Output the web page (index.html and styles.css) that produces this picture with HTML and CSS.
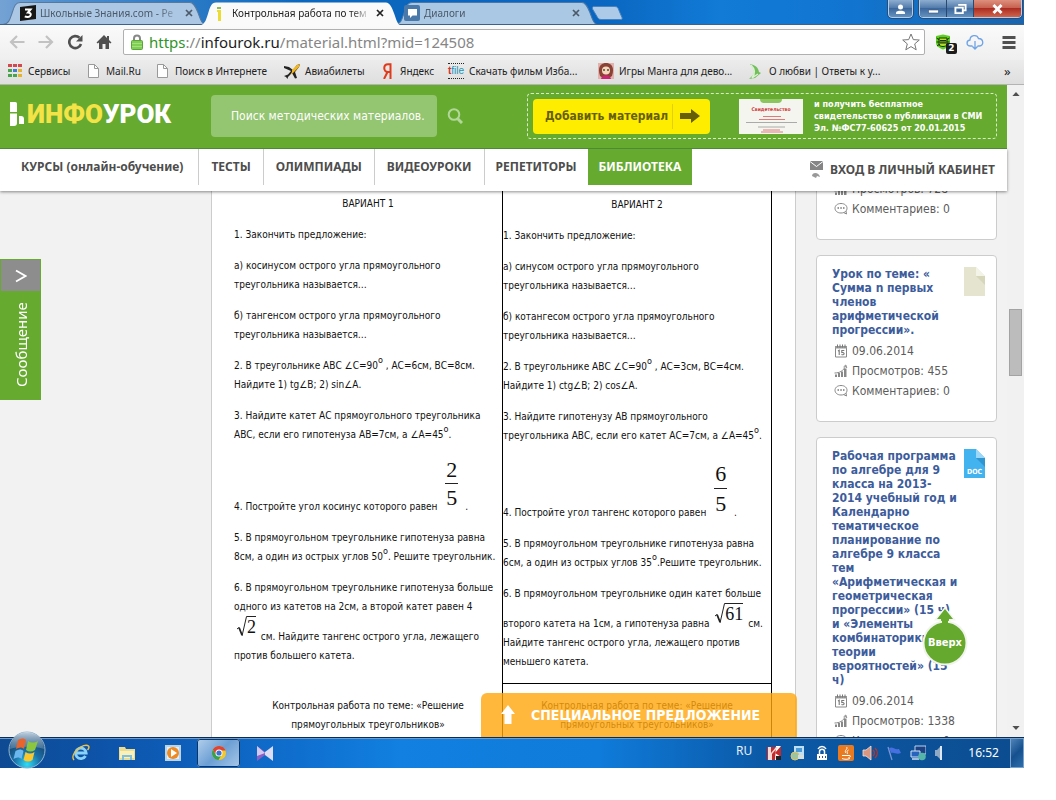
FILE: index.html
```html
<!DOCTYPE html>
<html lang="ru">
<head>
<meta charset="utf-8">
<title>Контрольная работа по теме</title>
<link rel="stylesheet" href="styles.css">
</head>
<body>
<svg class="defs" width="0" height="0" aria-hidden="true">
  <symbol id="i-cal" viewBox="0 0 14 14"><path d="M1.500 3h11v10h-11z" fill="#fff" stroke="#888"/><path d="M1 2h12v2.500H1z" fill="#999"/><path d="M3.500 .5v3M6 .5v3M8.500 .5v3M11 .5v3" stroke="#777"/><path d="M4 7l1.200-.8V11M10.300 6.500H7.800V8.500c2.600-.4 3 2 1.200 2.200-.7 0-1.200-.1-1.500-.4" fill="none" stroke="#777" stroke-width="1.100"/></symbol>
  <symbol id="i-views" viewBox="0 0 14 14"><path d="M1 10.500h2V13H1zM4 9h2v4H4zM7 7.500h2V13H7zM10 4.500h2.500V13H10z" fill="#888"/><path d="M.5 9c5 0 9-2 11-7M9.500 3l2.300-2 1 3" fill="none" stroke="#888"/></symbol>
  <symbol id="i-com" viewBox="0 0 14 14"><path d="M7 1.500c8 0 8 9.500 0 9.500-8 0-8-9.500 0-9.500zM9.500 10.500l3 1.500-.5-3" fill="#fff" stroke="#888"/><path d="M3.500 6h1.500M6.300 6h1.500M9 6h1.500" stroke="#777" stroke-width="1.500"/></symbol>
  <symbol id="i-page" viewBox="0 0 16 16"><path d="M3.500 1.500h6l4 4v9h-10z" fill="#fdfdfd" stroke="#999"/><path d="M9.500 1.500v4h4" fill="none" stroke="#999"/></symbol>
  <symbol id="i-x" viewBox="0 0 8 8"><path d="M1 1l6 6M7 1L1 7" stroke="currentColor" stroke-width="1.700"/></symbol>
</svg>

<div class="desktop">
  <header class="tabstrip">
    <div class="tab">
      <svg class="tab-shape" viewBox="0 0 200 23" preserveAspectRatio="none"><path d="M0 23.500C6 23 7 18 9 12S12 1.500 17 1.500H185c4 0 6 5 8 10s3 11 7 12z" fill="#acc7e3" stroke="#56799f"/></svg>
      <svg class="fav" viewBox="0 0 16 16"><path d="M0 2l16-2v14L0 16z" fill="#161616"/><path d="M5 4.500h5.500L8 7.500c4 0 3.500 4.500-.5 4.500-1 0-2-.2-2.700-.6" fill="none" stroke="#fff" stroke-width="2"/></svg>
      <span class="tab-title">Школьные Знания.com - Ре</span>
      <button class="tab-x" aria-label="Закрыть"><svg><use href="#i-x"/></svg></button>
    </div>
    <div class="tab tab-on">
      <svg class="tab-shape" viewBox="0 0 200 23" preserveAspectRatio="none"><path d="M0 23.500C6 23 7 18 9 12S12 1.500 17 1.500H185c4 0 6 5 8 10s3 11 7 12z" fill="#fafafa"/></svg>
      <svg class="fav" viewBox="0 0 16 16"><path d="M5 2h4v2H5z" fill="#8dbb4b"/><path d="M5 5h4v11H6V7H5z" fill="#ecdb33"/></svg>
      <span class="tab-title">Контрольная работа по тем</span>
      <button class="tab-x" aria-label="Закрыть"><svg><use href="#i-x"/></svg></button>
    </div>
    <div class="tab tab-last">
      <svg class="tab-shape" viewBox="0 0 200 23" preserveAspectRatio="none"><path d="M0 23.500C6 23 7 18 9 12S12 1.500 17 1.500H185c4 0 6 5 8 10s3 11 7 12z" fill="#aac8e4" stroke="#4878aa"/></svg>
      <svg class="fav" viewBox="0 0 16 16"><rect width="16" height="16" rx="2" fill="#4a78a8"/><path d="M4 4h9v6.500H8.500L6 13v-2.500H4z" fill="#fff"/></svg>
      <span class="tab-title">Диалоги</span>
      <button class="tab-x" aria-label="Закрыть"><svg><use href="#i-x"/></svg></button>
    </div>
    <button class="newtab" aria-label="Новая вкладка"><svg viewBox="0 0 32 16"><path d="M3 1.500h21c2 0 3 1 4 4l3 7c.5 1.500 0 2-1.500 2H10c-2 0-3-1-4-3L1.500 4C1 2.500 1.500 1.500 3 1.500z" fill="#adcae8" stroke="#4682bd"/></svg></button>
    <div class="wbtns">
      <button class="wb user" aria-label="Профиль"><svg viewBox="0 0 12 12"><circle cx="6" cy="4" r="2.500" fill="#fff"/><path d="M1.500 11V9.500C1.500 7 10.500 7 10.500 9.500V11z" fill="#fff"/></svg></button>
      <div class="wgroup">
        <button class="wb" aria-label="Свернуть"><svg viewBox="0 0 12 12"><path d="M1 7h10v3H1z" fill="#fff" stroke="#35527a" stroke-width=".6"/></svg></button>
        <button class="wb" aria-label="Развернуть"><svg viewBox="0 0 14 12"><path d="M4.500 1.500h8v6h-2M1.500 4.500h8v6h-8z" fill="none" stroke="#fff" stroke-width="2"/><path d="M4 7h3v1H4z" fill="#35527a"/></svg></button>
        <button class="wb close" aria-label="Закрыть окно"><svg viewBox="0 0 12 12"><path d="M2 2l8 8M10 2l-8 8" stroke="#fff" stroke-width="3"/></svg></button>
      </div>
    </div>
  </header>

  <div class="toolbar">
    <button class="tb" aria-label="Назад"><svg viewBox="0 0 16 16"><path d="M15.500 8H2M8 2L2 8l6 6" fill="none" stroke="#c2c2c2" stroke-width="2.200"/></svg></button>
    <button class="tb" aria-label="Вперёд"><svg viewBox="0 0 16 16"><path d="M.5 8H14M8 2l6 6-6 6" fill="none" stroke="#c2c2c2" stroke-width="2.200"/></svg></button>
    <button class="tb" aria-label="Обновить"><svg viewBox="0 0 16 16"><path d="M12.500 3.800A6 6 0 1 0 14 10" fill="none" stroke="#505050" stroke-width="2.600"/><path d="M15.500 1v6.500H9z" fill="#505050"/></svg></button>
    <button class="tb" aria-label="Домой"><svg viewBox="0 0 16 16"><path d="M8 1L.5 8.500l1.200 1L3 8.500V15h3.500v-5h3v5H13V8.500l1.300 1 1.200-1L13 6V2h-2v2z" fill="#505050"/></svg></button>
    <div class="omni">
      <svg class="lock" viewBox="0 0 12 16"><path d="M3 7V4.500C3 .5 9 .5 9 4.500V7" fill="none" stroke="#888" stroke-width="2"/><rect x=".5" y="6.500" width="11" height="9" rx="1" fill="#80cf54" stroke="#5aa43a"/><path d="M1 9.500h10M1 12.500h10" stroke="#a5e07f"/></svg>
      <a class="url" href="#"><span class="sec">https</span>://<span class="host">infourok.ru</span>/material.html?mid=124508</a>
      <svg class="star" viewBox="0 0 18 18"><path d="M9 1l2.300 5.600 6 .4-4.600 3.900 1.500 5.900L9 13.600l-5.200 3.200 1.500-5.900L.7 7l6-.4z" fill="#fff" stroke="#777"/></svg>
    </div>
    <div class="exts">
      <div class="ext"><svg viewBox="0 0 16 16"><path d="M1 2l7-1.500L15 2v7c0 3-3 5-7 6.500C4 14 1 12 1 9z" fill="#5fd022"/><path d="M4 4h8v7c-2 2-6 2-8 0zM1.500 4l3 2M14.500 4l-3 2M1.500 8h13M2 12l3-2M14 12l-3-2" stroke="#153806" fill="#b4de2d"/><path d="M5 6.500h6M5 9h6" stroke="#153806"/></svg><span class="badge">2</span></div>
      <svg class="cloud" viewBox="0 0 18 16"><path d="M6.500 12H4.500C0 12 0 6.500 4 6 4 1 11 0 12.500 4.500c5 0 6 7 1 7.500h-2M9 7v8M6.500 12.500L9 15l2.500-2.500" fill="none" stroke="#6ea3e6" stroke-width="1.300"/></svg>
      <button class="tb" aria-label="Меню"><svg viewBox="0 0 16 16"><path d="M1.500 3.500h13M1.500 8.500h13M1.500 13.500h13" stroke="#505050" stroke-width="3"/></svg></button>
    </div>
  </div>

  <nav class="bookmarks">
    <a href="#"><svg viewBox="0 0 16 16"><path d="M1 1h4v3H1zM6 1h4v3H6zM11 1h4v3h-4z" fill="#d5474e"/><path d="M1 6h4v3H1z" fill="#49a54d"/><path d="M6 6h4v3H6z" fill="#3f7fd0"/><path d="M11 6h4v3h-4zM11 11h4v3h-4z" fill="#e6b32e"/><path d="M1 11h4v3H1zM6 11h4v3H6z" fill="#49a54d"/></svg>Сервисы</a>
    <a href="#"><svg><use href="#i-page"/></svg>Mail.Ru</a>
    <a href="#"><svg><use href="#i-page"/></svg>Поиск в Интернете</a>
    <a href="#"><svg viewBox="0 0 16 16"><path d="M0 3l5 1 4 3 4-5 3-1-1 3-4 5 2 6-2 .5L8 10l-4 4-.5 2L2 14l-2-1 4-1.500L7 8 0 5z" fill="#222"/><path d="M8 7l5-5 3-1-1 3-6 6-3 2 2-3z" fill="#f2b61c"/></svg>Авиабилеты</a>
    <a href="#"><svg viewBox="0 0 16 16"><path d="M11.500 16V1.200H9c-5 0-5 7.800 0 7.800h2.500M8.500 9L5 16" fill="none" stroke="#e03a1c" stroke-width="2"/></svg>Яндекс</a>
    <a href="#"><span class="tfile"><b>t</b>file</span>Скачать фильм Изба...</a>
    <a href="#"><svg viewBox="0 0 16 16"><path d="M0 0h16v16H0z" fill="#e2b3ae"/><path d="M2 13C-1 4 3 0 8 0s9 4 6 13l-3 2H5z" fill="#8b4236"/><circle cx="8" cy="7.500" r="4" fill="#f7d6bd"/><path d="M5 7h2M9 7h2" stroke="#453" stroke-width="1.500"/><path d="M3 16c1-5 9-5 10 0z" fill="#cc2473"/></svg>Игры Манга для дево...</a>
    <a href="#"><svg viewBox="0 0 16 16"><path d="M2 1c5 1 8 3 9 8l2 1-6 5-6 1c3-3 5-4 5-7S4 4 2 1z" fill="#74bf5d"/><path d="M3 2c4 4 5 8 1 13l6-4" fill="none" stroke="#d9f2d0" stroke-width="1.500"/></svg>О любви | Ответы к у...</a>
    <button class="more" aria-label="Другие закладки">»</button>
  </nav>

  <div class="viewport">
    <div class="site">
      <header class="hero">
        <a class="logo" href="#"><svg viewBox="0 0 14 24"><path d="M0 0h5c2 0 2 1 2 3v7H0zM0 11.500h7V21c0 2-1 3-3 3H0zM9 14h2c2 0 3 1 3 3v5H9z" fill="#fff"/></svg><span class="yl">ИНФО</span><span>УРОК</span></a>
        <input class="search" type="text" aria-label="Поиск" value="Поиск методических материалов.">
        <button class="find" aria-label="Найти"><svg viewBox="0 0 16 16"><circle cx="7" cy="6.500" r="5.300" fill="none" stroke="#b2d798" stroke-width="2"/><path d="M10.500 10.500L15 15" stroke="#b2d798" stroke-width="3"/></svg></button>
        <div class="promo">
          <button class="add"><span>Добавить материал</span><svg viewBox="0 0 20 14"><path d="M0 4h11V0l9 7-9 7v-4H0z" fill="#665f08"/></svg></button>
          <div class="cert"><i></i><b>Свидетельство</b><svg viewBox="0 0 60 18"><path d="M22 1.500h18M18 4.500h26M20 17h22" stroke="#df7a7a"/><path d="M5 7.500h51M17 12h27" stroke="#aaa"/><path d="M22 15h17" stroke="#df7a7a"/></svg></div>
          <p>и получить бесплатное<br>свидетельство о публикации в СМИ<br>Эл. №ФС77-60625 от 20.01.2015</p>
        </div>
      </header>
      <nav class="menu">
        <a href="#">КУРСЫ (онлайн-обучение)</a><a href="#">ТЕСТЫ</a><a href="#">ОЛИМПИАДЫ</a><a href="#">ВИДЕОУРОКИ</a><a href="#">РЕПЕТИТОРЫ</a><a class="on" href="#">БИБЛИОТЕКА</a>
        <a class="login" href="#"><svg viewBox="0 0 13 18"><path d="M0 0h13v9H0z" fill="#858585"/><path d="M0 .5l6.500 5 6.500-5" fill="none" stroke="#fff"/><path d="M2 15c0-4 7-4 8 1l-3-1-1 2" fill="#999"/></svg>ВХОД В ЛИЧНЫЙ КАБИНЕТ</a>
      </nav>
      <div class="content">
        <article class="paper">
          <table>
            <tr class="r1">
              <td>
                <p class="c">ВАРИАНТ 1</p>
                <p>1. Закончить предложение:</p>
                <p>а) косинусом острого угла прямоугольного<br>треугольника называется…</p>
                <p>б) тангенсом острого угла прямоугольного<br>треугольника называется…</p>
                <p>2. В треугольнике АВС ∠С=90<sup>о</sup> , АС=6см, ВС=8см.<br>Найдите 1) tg∠В; 2) sin∠А.</p>
                <p>3. Найдите катет АС прямоугольного треугольника<br>АВС, если его гипотенуза АВ=7см, а ∠А=45<sup>о</sup>.</p>
                <p>4. Постройте угол косинус которого равен <span class="frac"><span>2</span><span>5</span></span> .</p>
                <p>5. В прямоугольном треугольнике гипотенуза равна<br>8см, а один из острых углов 50<sup>о</sup>. Решите треугольник.</p>
                <p>6. В прямоугольном треугольнике гипотенуза больше<br>одного из катетов на 2см, а второй катет равен 4<br><span class="root"><svg viewBox="0 0 10 21"><path d="M0 13l2-1.500" stroke="#222" fill="none"/><path d="M2 11.500l3 7.500" stroke="#222" stroke-width="1.800"/><path d="M5 20L9.500.5h.5" stroke="#222" fill="none"/></svg><span>2</span></span> см. Найдите тангенс острого угла, лежащего<br>против большего катета.</p>
              </td>
              <td>
                <p class="c">ВАРИАНТ 2</p>
                <p>1. Закончить предложение:</p>
                <p>а) синусом острого угла прямоугольного<br>треугольника называется…</p>
                <p>б) котангесом острого угла прямоугольного<br>треугольника называется…</p>
                <p>2. В треугольнике АВС ∠С=90<sup>о</sup> , АС=3см, ВС=4см.<br>Найдите 1) ctg∠В; 2) cos∠А.</p>
                <p>3. Найдите гипотенузу АВ прямоугольного<br>треугольника АВС, если его катет АС=7см, а ∠А=45<sup>о</sup>.</p>
                <p>4. Постройте угол тангенс которого равен <span class="frac tall"><span>6</span><span>5</span></span> .</p>
                <p>5. В прямоугольном треугольнике гипотенуза равна<br>6см, а один из острых углов 35<sup>о</sup>.Решите треугольник.</p>
                <p>6. В прямоугольном треугольнике один катет больше<br>второго катета на 1см, а гипотенуза равна <span class="root"><svg viewBox="0 0 10 21"><path d="M0 13l2-1.500" stroke="#222" fill="none"/><path d="M2 11.500l3 7.500" stroke="#222" stroke-width="1.800"/><path d="M5 20L9.500.5h.5" stroke="#222" fill="none"/></svg><span>61</span></span> см.<br>Найдите тангенс острого угла, лежащего против<br>меньшего катета.</p>
              </td>
            </tr>
            <tr class="r2">
              <td><p class="c">Контрольная работа по теме: «Решение<br>прямоугольных треугольников»</p></td>
              <td><p class="c">Контрольная работа по теме: «Решение<br>прямоугольных треугольников»</p></td>
            </tr>
          </table>
        </article>
        <aside class="side">
          <section class="card">
            <ul><li><svg><use href="#i-cal"/></svg>09.06.2014</li><li><svg><use href="#i-views"/></svg>Просмотров: 728</li><li><svg><use href="#i-com"/></svg>Комментариев: 0</li></ul>
          </section>
          <section class="card">
            <div class="head"><a href="#">Урок по теме: «<br>Сумма n первых<br>членов<br>арифметической<br>прогрессии».</a>
            <svg viewBox="0 0 21 29"><path d="M0 0h12l9 9v20H0z" fill="#e5e5cf"/><path d="M12 0l9 9h-9z" fill="#f3f3e8"/><path d="M12 9h9v9z" fill="#d6d6bb"/></svg></div>
            <ul><li><svg><use href="#i-cal"/></svg>09.06.2014</li><li><svg><use href="#i-views"/></svg>Просмотров: 455</li><li><svg><use href="#i-com"/></svg>Комментариев: 0</li></ul>
          </section>
          <section class="card">
            <div class="head"><a href="#">Рабочая программа<br>по алгебре для 9<br>класса на 2013-<br>2014 учебный год и<br>Календарно<br>тематическое<br>планирование по<br>алгебре 9 класса<br>тем<br>«Арифметическая и<br>геометрическая<br>прогрессии» (15 ч)<br>и «Элементы<br>комбинаторики и<br>теории<br>вероятностей» (15<br>ч)</a>
            <svg viewBox="0 0 21 29"><path d="M0 0h12l9 9v20H0z" fill="#43b3f0"/><path d="M12 0l9 9h-9z" fill="#9ad7f8"/><path d="M12 9h9v9z" fill="#2f96d2"/><text x="3" y="25" class="doc">DOC</text></svg></div>
            <ul><li><svg><use href="#i-cal"/></svg>09.06.2014</li><li><svg><use href="#i-views"/></svg>Просмотров: 1338</li><li><svg><use href="#i-com"/></svg>Комментариев: 0</li></ul>
          </section>
        </aside>
        <button class="msg"><span class="chev"><svg viewBox="0 0 12 14"><path d="M1 1.500L10.500 7 1 12.500" fill="none" stroke="#fff" stroke-width="1.800"/></svg></span><span class="msg-t">Сообщение</span></button>
        <a class="offer" href="#"><svg viewBox="0 0 14 20"><path d="M7 0l7 9h-3.500v10h-7V9H0z" fill="#fff"/></svg>СПЕЦИАЛЬНОЕ ПРЕДЛОЖЕНИЕ</a>
        <button class="up"><svg viewBox="0 0 46 58"><path d="M23 1l8 10h-4v6h-8v-6h-4z" fill="#65a92e" stroke="#f3f8ef" stroke-width="3" paint-order="stroke"/><circle cx="23" cy="35" r="21.500" fill="#65a92e" stroke="#f0f4ec" stroke-width="2"/><path d="M20 10h6v6h-6z" fill="#65a92e"/></svg><span>Вверх</span></button>
      </div>
    </div>
    <div class="scroll"><svg viewBox="0 0 9 5"><path d="M0 5l4.500-5L9 5z" fill="#505050"/></svg><div class="thumb"></div><svg viewBox="0 0 9 5"><path d="M0 0l4.500 5L9 0z" fill="#505050"/></svg></div>
  </div>

  <footer class="taskbar">
    <button class="orb" aria-label="Пуск"><svg viewBox="0 0 38 38"><defs><radialGradient id="og" cx=".5" cy=".9" r=".8"><stop offset="0" stop-color="#2fdcf5"/><stop offset=".45" stop-color="#1b71a8"/><stop offset="1" stop-color="#17395f"/></radialGradient><linearGradient id="gl" x2="0" y2="1"><stop offset="0" stop-color="#d5e3ee" stop-opacity=".9"/><stop offset="1" stop-color="#7ea4c2" stop-opacity=".4"/></linearGradient></defs><circle cx="19" cy="19" r="18" fill="url(#og)" stroke="#91b6d3"/><path d="M2 18a17 17 0 0 1 34 0c-8-3-26-3-34 0z" fill="url(#gl)"/><path d="M10 9c3-2 6-2 8 0l-2 9c-2-2-5-2-8 0z" fill="#e8642c"/><path d="M20 10c3 2 6 2 10 0l-3 9c-3 2-6 2-9 0z" fill="#8cc63e"/><path d="M7.500 20c3-2 6-2 8 0l-2 8c-2-2-5-2-8 0z" fill="#6cb8ee"/><path d="M17.500 21c3 2 6 2 9 0l-2 8c-3 2-6 2-9 0z" fill="#fcc72c"/></svg></button>
    <div class="pins">
      <button aria-label="Internet Explorer"><svg viewBox="0 0 18 18"><path d="M13.500 12A5.300 5.300 0 1 1 14.200 9H5" fill="none" stroke="#8ad3f8" stroke-width="2.800"/><path d="M2 16C-3 10 12-2 16.500 2c1 1 0 3-1 4" fill="none" stroke="#eac34c" stroke-width="1.500"/></svg></button>
      <button aria-label="Проводник"><svg viewBox="0 0 18 18"><path d="M1 3h6l1 2h9v11H1z" fill="#ecdc90"/><path d="M2 7h14v7H2z" fill="#faf0b8"/><path d="M4 16v-5h10v5h-2v-3H6v3z" fill="#7fc0e0"/></svg></button>
      <button aria-label="Проигрыватель"><svg viewBox="0 0 18 18"><path d="M1 1h16v16H1z" fill="#b7d5ea"/><path d="M3 3h12v12H3z" fill="#e2edf5"/><circle cx="9" cy="9" r="6" fill="#ee8a24"/><path d="M7 5l6 4-6 4z" fill="#fff"/></svg></button>
      <button class="run" aria-label="Chrome"><svg viewBox="0 0 18 18"><circle cx="9" cy="9" r="7" fill="#f3c82d"/><path d="M2.900 5.500A7 7 0 0 1 15.600 6.500H9L6 11z" fill="#db4437"/><path d="M2.900 5.500A7 7 0 0 0 8.500 16l3-5L6 11z" fill="#36a055"/><circle cx="9" cy="9" r="3.500" fill="#fff"/><circle cx="9" cy="9" r="2.600" fill="#3d72d0"/></svg></button>
      <button aria-label="Видеоредактор"><svg viewBox="0 0 18 18"><path d="M1 2l8 6v3l-8 6z" fill="#8d5fc4"/><path d="M17 2L9 8v3l8 6z" fill="#dcdcf4"/><path d="M1 2l8 7-8 3z" fill="#d5c8f0"/></svg></button>
    </div>
    <span class="lang">RU</span>
    <div class="tray">
      <svg viewBox="0 0 16 16"><path d="M1 2h14v13H1z" fill="#c42a2c"/><path d="M10 1h5l-6 7 6 4v3H9z" fill="#fff"/><path d="M2 2h3v6l5-6h2L6 9v6H2z" fill="#f6d8d4"/><path d="M10 11h5v4h-5z" fill="#222"/></svg>
      <svg viewBox="0 0 16 16"><path d="M4 1h10v9H4z" fill="#bfe0f4"/><path d="M6 3h6v4H6z" fill="#4a9bd8"/><circle cx="5" cy="11" r="4" fill="#9cc5a0" stroke="#e6c25a"/><path d="M8 10h6v4H8z" fill="#d8dfd8"/></svg>
      <svg viewBox="0 0 16 16"><path d="M3 9h10v6H3z" fill="#fff"/><path d="M5.500 9V6.500c0-3 5-3 5 0V9M4 4c2-3.500 6-3.500 8 0" fill="none" stroke="#fff" stroke-width="1.500"/><path d="M5 12h1M8 12h1M11 12h1" stroke="#357" stroke-width="2"/></svg>
      <svg viewBox="0 0 16 16"><rect width="16" height="16" rx="2" fill="#e97a20"/><path d="M8.500 2c2 2-3 3.500-.5 6M10.500 5c-3 1.500 0 2.500-1.500 4M4 10.500h7c3 0 1 2-1 2.500M4 13.500c2 1 6 1 8 0" fill="none" stroke="#fff"/></svg>
      <svg viewBox="0 0 16 16"><path d="M1 5h3l5-4v14l-5-4H1z" fill="#d99782" stroke="#f4e4dd" stroke-width=".8"/><path d="M11 5c2 2 2 4 0 6M13 3c3 3 3 7 0 10" fill="none" stroke="#bd3327" stroke-width="1.300"/></svg>
      <svg viewBox="0 0 16 16"><path d="M2 2l4 13" stroke="#7896d6" stroke-width="1.300"/><path d="M3 3c4-2 5 2 10 1l2 4c-5 2-6-1-10 0z" fill="#466fe0"/></svg>
      <svg viewBox="0 0 16 16"><path d="M5 1h11v8H5z" fill="#1d4284" stroke="#bcd3ee"/><path d="M1 6h9v6H1z" fill="#2864bd" stroke="#d0e2f4"/><path d="M2 14h7" stroke="#d0e2f4" stroke-width="1.500"/><circle cx="12" cy="11.500" r="3.800" fill="#55b5a8"/></svg>
      <svg viewBox="0 0 16 16"><path d="M1 5h2l4-4v14l-4-4H1z" fill="#8fa9c4"/><path d="M7 1v14" stroke="#dde8f2" stroke-width="2"/></svg>
    </div>
    <time class="clock">16:52</time>
    <button class="showdesk" aria-label="Показать рабочий стол"></button>
  </footer>
</div>
</body>
</html>
```
FILE: styles.css
```css
*{box-sizing:border-box}
body{margin:0;background:#fff;font-family:"DejaVu Sans Condensed","DejaVu Sans",sans-serif;color:#222}
button{border:0;padding:0;margin:0;background:none;font:inherit;color:inherit;display:flex;align-items:center;justify-content:center}
a{color:inherit;text-decoration:none}
p{margin:0}
.defs{position:absolute}
.desktop{height:100vh;padding:0 32px 32px 0;display:flex;flex-direction:column}

/* browser chrome */
.tabstrip{height:25px;flex:none;display:flex;align-items:flex-end;padding-left:3px;position:relative;background:linear-gradient(90deg,#75a2d4 0,#4f8fcf 60px,#0b67bd 300px,#0a66c0 600px,#117bd6 720px,#1175d0 850px,#1a64ad);border-bottom:1px solid #3d628a;font:10px/16px "Noto Sans",sans-serif;color:#4b5968}
.tab{width:202px;height:23px;margin-right:-6px;position:relative;display:flex;align-items:center;padding:0 9px 0 17px}
.tab-last{padding:0 14px 0 9px}
.tab-shape{position:absolute;inset:0;width:100%;height:100%}
.tab-on{z-index:1;height:24px;margin-bottom:-1px;color:#222;padding:0 14px 0 13px}
.fav{width:16px;height:16px;flex:none;position:relative;margin-right:4px}
.tab-title{flex:1;min-width:0;overflow:hidden;white-space:nowrap;position:relative;mask-image:linear-gradient(90deg,#000 85%,transparent)}
.tab-x{width:14px;height:14px;position:relative;margin:0 0 0 2px}
.tab-x svg{width:8px;height:8px}
.newtab{margin-left:0;height:22px}
.newtab svg{width:32px;height:16px}
.wbtns{margin-left:auto;align-self:flex-start;display:flex;gap:6px;padding-right:2px}
.wgroup{display:flex;border-radius:0 0 4px 4px;overflow:hidden;border:1px solid #b4cde6;border-top:0;outline:1px solid #274d7b}
.wb{width:27px;height:17px;background:linear-gradient(#8eaed0,#4d77a8 50%,#3c689d 50%,#6591bf);border-right:1px solid #29496f}
.wb svg{width:13px;height:12px}
.wb.user{width:25px;height:18px;border:1px solid #b4cde6;border-top:0;outline:1px solid #274d7b;border-radius:0 0 4px 4px}
.wb.close{width:47px;border:0;background:linear-gradient(#dd8f7d,#c65d4c 50%,#ac2e22 50%,#cf654d)}
.toolbar{height:35px;flex:none;display:flex;align-items:center;padding:0 7px 1px 9px;background:linear-gradient(#fafafa,#efefef)}
.tb{width:29px;height:24px;justify-content:flex-start;flex:none}
.tb svg{width:16px;height:16px}
.omni{flex:1;height:26px;margin:0 10px 0 -2px;background:#fff;border:1px solid #b0b0b0;border-radius:2px;display:flex;align-items:center;padding:0 4px 0 7px;gap:6px}
.lock{width:12px;height:16px}
.url{font:15px/22px "Noto Sans",sans-serif;color:#868686;flex:1;white-space:nowrap}
.sec{color:#2f9528}.host{color:#1d1d1d}
.star{width:18px;height:18px}
.exts{display:flex;align-items:center}
.ext{width:31px;height:16px;position:relative}
.ext svg{width:16px;height:16px}
.badge{position:absolute;left:11px;top:9px;width:11px;height:11px;border-radius:2px;background:#1d1d1d;color:#fff;font:bold 9px/11px "DejaVu Sans",sans-serif;text-align:center}
.cloud{width:18px;height:16px;margin-right:17px}
.exts .tb{width:16px}
.bookmarks{height:25px;flex:none;display:grid;grid-template-columns:78px 69px 130px 95px 69px 150px 150px 1fr 20px;padding:0 0 3px 7px;align-items:center;background:linear-gradient(#ececec,#dedede);border-bottom:1px solid #b3b3b3;font:10px/16px "Noto Sans",sans-serif;white-space:nowrap}
.bookmarks a{display:flex;align-items:center;gap:5px}
.bookmarks svg{width:16px;height:16px;flex:none}
.tfile{width:16px;height:16px;border:dotted #222;border-width:1px 0;font:10px/13px "Liberation Sans",sans-serif;color:#1994b8}
.tfile b{color:#c33}
.more{font-size:13px;justify-content:flex-start}

/* site */
.viewport{flex:1;min-height:0;display:flex}
.site{flex:1;min-width:0;display:flex;flex-direction:column;background:#f2f2f2}
.hero{height:64px;flex:none;background:#66aa30;border-bottom:1px solid #4e8a35;display:flex;align-items:center;padding:0 10px 1px 9px;position:relative;z-index:3}
.logo{width:202px;display:flex;align-items:center;color:#fff;font:900 26px/26px Roboto,sans-serif;padding-bottom:5px}
.logo svg{width:14px;height:24px;margin:0 3px 0 1px;flex:none}
.yl{color:#f4e346}
.search{width:226px;height:42px;border:0;border-radius:4px;background:#94c571;color:#fff;font:12px "DejaVu Sans Condensed",sans-serif;padding:0 8px 0 20px}
.find{margin-left:10px}
.find svg{width:16px;height:16px}
.promo{margin-left:auto;width:470px;height:46px;border:1px dashed #d5eac5;border-radius:4px;display:flex;align-items:center;padding-left:5px}
.add{width:177px;height:35px;background:#ffed00;border-radius:4px;color:#665f08;font-weight:bold;font-size:12px;justify-content:flex-start;padding-left:12px}
.add span{width:128px;text-align:left;white-space:nowrap;line-height:25px;border-right:1px solid #e2d010}
.add svg{width:20px;height:14px;margin-left:7px}
.cert{width:64px;height:35px;margin:0 11px 0 29px;background:#f5f5ef;display:flex;flex-direction:column;align-items:center;overflow:hidden}
.cert i{width:22px;height:4px;flex:none;border-radius:0 0 10px 10px;background:#8cc560}
.cert b{font:bold 5px/12px "DejaVu Sans Condensed",sans-serif;color:#d03a3a}
.cert svg{width:60px;height:18px}
.promo p{font-weight:bold;font-size:9px;line-height:12px;color:#fff;white-space:nowrap}
.menu{height:42px;flex:none;background:#fff;display:flex;align-items:flex-start;padding:0 12px 0 9px;font:bold 12px/36px "Noto Sans",sans-serif;color:#4d4d4d;white-space:nowrap;position:relative;z-index:2;box-shadow:0 1px 3px rgba(0,0,0,.45)}
.menu a{padding:0 12px;border-right:1px solid #ccc}
.menu a:first-child{padding-right:15px}
.menu a:nth-child(5){border-right:0;padding:0 11px}
.menu .on{background:#66aa30;color:#fff;border:0;padding:0 11px}
.menu .login{margin-left:auto;border:0;padding:0;display:flex;align-items:center;gap:7px;line-height:42px}
.login svg{width:13px;height:18px}
.content{flex:1;min-height:0;overflow:hidden;display:flex;align-items:flex-start;padding-left:211px;position:relative}
.paper{flex:1;background:#fff;border:solid #ccc;border-width:0 1px;padding:0 23px 0 22px}
.paper table{width:100%;border-spacing:0;table-layout:fixed;font-size:10px;line-height:19px;color:#111;white-space:nowrap}
.paper td{padding:0;vertical-align:top}
.paper td:first-child{width:268px}
.paper td+td{border:solid #000;border-width:0 1px}
.paper .r1 td{padding-top:3px}
.paper .r1 td+td{border-bottom-width:1px;padding-top:4px}
.paper .r2 td{padding-top:12px}
.paper p{margin-bottom:12px}
.c{text-align:center}
sup{font-size:9px;line-height:0;vertical-align:6px}
.frac{display:inline-block;vertical-align:5px;margin:0 4px 0 5px;font:22px/27px "Liberation Serif",serif}
.frac span{display:block;padding:0 1px}
.frac span+span{border-top:1px solid #222}
.tall{padding-top:2px;line-height:29px}
.root{display:inline-flex;height:21px;margin:0 2px 0 3px;vertical-align:3px;font:18px/22px "Liberation Serif",serif}
.root svg{width:10px;height:21px}
.root span{border-top:1px solid #222;line-height:20px}
.side{width:181px;margin:-44px 10px 0 20px;flex:none}
.card{background:#fff;border:1px solid #ccc;border-radius:4px;padding:11px 11px 20px 15px;margin-bottom:15px;font-size:12px}
.head{display:flex;margin-bottom:4px}
.head a{flex:1;min-width:0;font-weight:bold;line-height:14px;color:#3d5c9c;white-space:nowrap}
.head svg{width:21px;height:29px;flex:none}
.doc{font:bold 7px "DejaVu Sans Condensed",sans-serif;fill:#fff}
.card ul{list-style:none;margin:0;padding:0 0 0 2px;color:#5c5c5c}
.card li{display:flex;align-items:center;gap:4px;height:20px}
.card li svg{width:14px;height:14px}
.msg{position:absolute;left:0;top:68px;width:41px;flex-direction:column;background:#66aa30;color:#fff;border:1px solid #66aa30}
.chev{width:100%;height:31px;background:#8d8d8d;display:flex;align-items:center;justify-content:center}
.chev svg{width:12px;height:14px}
.msg-t{height:108px;writing-mode:vertical-rl;transform:rotate(180deg);font:15px/24px "Noto Sans",sans-serif;text-align:center}
.offer{position:absolute;left:481px;bottom:0;width:316px;height:44px;background:rgba(255,165,11,.8);border-radius:6px 6px 0 0;color:#fff;font-weight:bold;font-size:14px;display:flex;align-items:center;gap:16px;padding-left:20px;white-space:nowrap}
.offer svg{width:14px;height:20px}
.up{position:absolute;right:39px;bottom:71px;width:46px;height:58px;color:#fff}
.up svg{position:absolute;inset:0;width:46px;height:58px}
.up span{position:relative;font:bold 11px/14px "DejaVu Sans Condensed",sans-serif;padding-top:12px}
.scroll{width:17px;background:#f1f1f1;display:flex;flex-direction:column;align-items:center;padding:7px 0}
.scroll svg{width:8px;height:4px}
.thumb{width:13px;height:67px;background:#bcbcbc;border:1px solid #a3a3a3;margin:213px 0 auto}

/* taskbar */
.taskbar{height:31px;flex:none;position:relative;display:flex;align-items:center;background:linear-gradient(90deg,#0e4a93 0,#0d55ad 120px,#0f6fcf 300px,#1180e0 400px,#0f7bda 600px,#0b5aa8 760px,#0c4c8f);border-top:1px solid #0b2d55;box-shadow:inset 0 1px #6f9ccb;color:#fff;z-index:4}
.orb{width:46px;height:38px;padding-left:8px;margin:-7px 13px 0 0;position:relative}
.orb svg{width:38px;height:38px}
.pins{display:flex;gap:3px;height:28px}
.pins button{width:43px}
.pins svg{width:18px;height:18px}
.pins .run{border:1px solid #e0edf8;outline:1px solid #0b3566;outline-offset:-1px;border-radius:3px;background:linear-gradient(135deg,#b0cdea,#6c9fd4 50%,#a4c5e7)}
.lang{margin-left:auto;font:12px/16px "Noto Sans",sans-serif;color:#e6eff8;padding-bottom:5px}
.tray{display:flex;gap:8px;margin-left:14px}
.tray svg{width:16px;height:16px}
.clock{font:12px/16px "Noto Sans",sans-serif;margin:0 11px 0 18px}
.showdesk{width:14px;height:30px;background:linear-gradient(135deg,#4f84ba,#16508e 50%,#2d6dab);border:1px solid #76a2cc}
```
